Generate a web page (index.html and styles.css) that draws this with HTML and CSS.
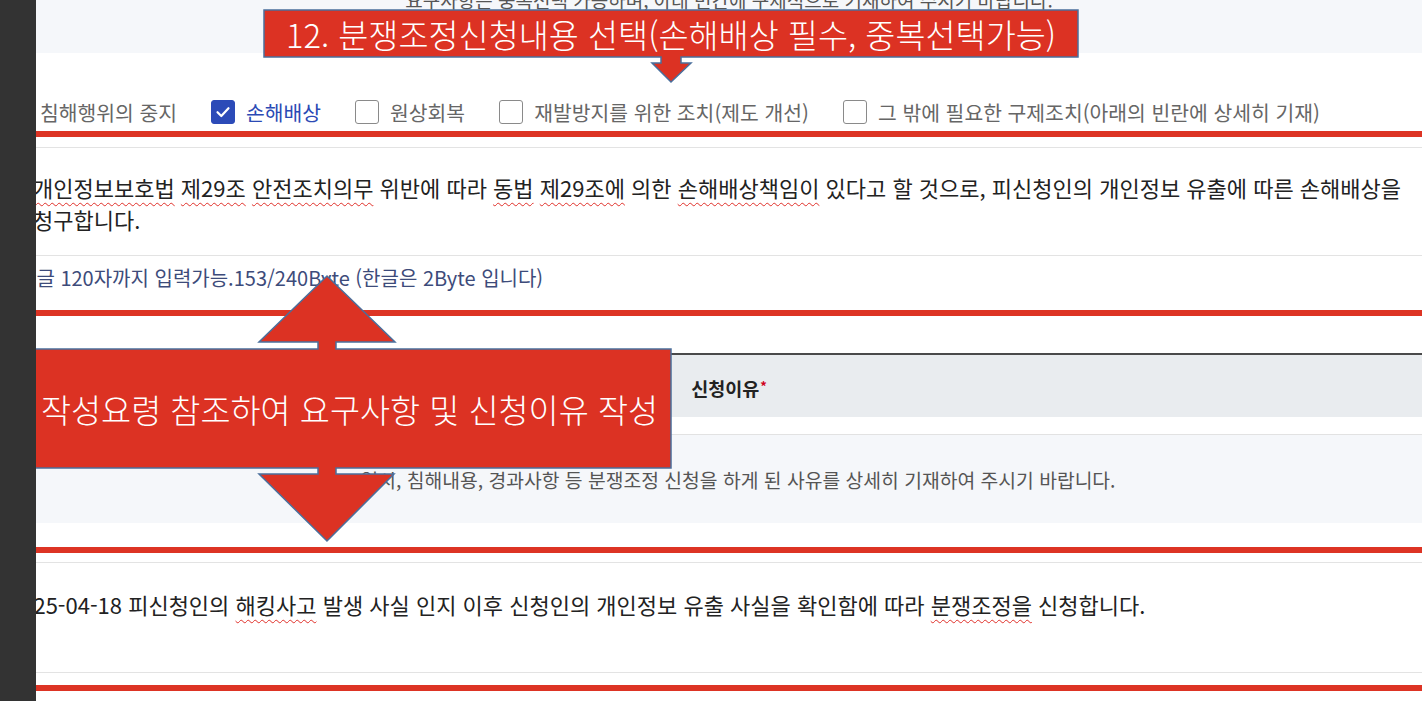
FILE: index.html
```html
<!DOCTYPE html>
<html lang="ko">
<head>
<meta charset="utf-8">
<title>분쟁조정신청</title>
<link rel="stylesheet" href="styles.css">
</head>
<body>
<div class="frame">
  <aside class="sidebar"></aside>
  <main class="main">
    <section class="guide-top">
      <p>요구사항은 중복선택 가능하며, 아래 빈칸에 구체적으로 기재하여 주시기 바랍니다.</p>
    </section>

    <div class="check-row">
      <label class="opt"><span class="cb"></span>침해행위의 중지</label>
      <label class="opt on"><span class="cb"><svg width="16" height="16" viewBox="0 0 16 16"><polyline points="2.5,8.2 6.3,12 13.5,4.2" fill="none" stroke="#fff" stroke-width="2.2" stroke-linecap="round" stroke-linejoin="round"/></svg></span>손해배상</label>
      <label class="opt"><span class="cb"></span>원상회복</label>
      <label class="opt"><span class="cb"></span>재발방지를 위한 조치(제도 개선)</label>
      <label class="opt"><span class="cb"></span>그 밖에 필요한 구제조치(아래의 빈란에 상세히 기재)</label>
    </div>

    <div class="rule"></div>

    <div class="textbox tb1">
      <p><span class="spell">개인정보보호법</span> <span class="spell">제29조</span> <span class="spell">안전조치의무</span> 위반에 따라 <span class="spell">동법</span> <span class="spell">제29조에</span> 의한 <span class="spell">손해배상책임이</span> 있다고 할 것으로, 피신청인의 개인정보 유출에 따른 손해배상을 청구합니다.</p>
    </div>
    <div class="counter">한글 120자까지 입력가능.153/240Byte (한글은 2Byte 입니다)</div>

    <div class="rule"></div>

    <div class="reason">
      <div class="reason-head">신청이유<span class="req">*</span></div>
      <div class="reason-body">일시, 침해내용, 경과사항 등 분쟁조정 신청을 하게 된 사유를 상세히 기재하여 주시기 바랍니다.</div>
    </div>

    <div class="rule rule3"></div>

    <div class="textbox tb2">
      <p>2025-04-18 피신청인의 <span class="spell">해킹사고</span> 발생 사실 인지 이후 신청인의 개인정보 유출 사실을 확인함에 따라 <span class="spell">분쟁조정을</span> 신청합니다.</p>
    </div>

    <div class="rule rule4"></div>
  </main>
</div>

<div class="callout callout-top">
  <svg class="callout-shape" width="820" height="76" viewBox="0 0 820 76">
    <polygon points="2,2 816,2 816,49 419,49 419,55 429,55 409,74 390,55 399,55 399,49 2,49" />
  </svg>
  <div class="callout-text top-text">12. 분쟁조정신청내용 선택(손해배상 필수, 중복선택가능)</div>
</div>

<div class="callout callout-mid">
  <svg class="callout-shape" width="652" height="274" viewBox="0 0 652 274">
    <polygon points="4,77 294,77 294,70 235,70 303,4 371,70 312,70 312,77 647,77 647,196 312,196 312,202 370,202 303,269 235,202 294,202 294,196 4,196" />
  </svg>
  <div class="callout-text mid-text">작성요령 참조하여 요구사항 및 신청이유 작성</div>
</div>
</body>
</html>
```

FILE: styles.css
```css
* { box-sizing: border-box; }

html, body {
  margin: 0;
  padding: 0;
}

body {
  width: 1422px;
  height: 701px;
  overflow: hidden;
  position: relative;
  background: #ffffff;
  font-family: "Noto Sans CJK KR", "Noto Sans", sans-serif;
  color: #222;
}

.frame {
  display: flex;
  height: 701px;
}

.sidebar {
  width: 36px;
  flex: none;
  background: #333333;
  position: relative;
  z-index: 5;
}

.main {
  flex: 1;
  min-width: 0;
  overflow: hidden;
  display: flex;
  flex-direction: column;
}

/* top guide strip */
.guide-top {
  height: 53px;
  flex: none;
  background: #f5f7fa;
  overflow: hidden;
  text-align: center;
}

.guide-top p {
  margin: -13px 0 0;
  font-size: 19px;
  line-height: 26px;
  color: #555;
  white-space: nowrap;
}

/* checkbox row */
.check-row {
  height: 78px;
  flex: none;
  display: flex;
  align-items: center;
  padding-top: 47px;
  padding-bottom: 7px;
  margin-left: -31px;
  font-size: 20.4px;
  line-height: 24px;
  color: #666;
}

.opt {
  display: flex;
  align-items: center;
  gap: 11px;
  margin-right: 34px;
  white-space: nowrap;
}

.cb {
  width: 24px;
  height: 24px;
  flex: none;
  border: 1.5px solid #8a8a8a;
  border-radius: 3px;
  background: #fff;
  display: flex;
  align-items: center;
  justify-content: center;
}

.opt.on {
  color: #2b4ab5;
}

.opt.on .cb {
  background: #2c4bb8;
  border-color: #2c4bb8;
}

/* red annotation rules */
.rule {
  height: 6px;
  flex: none;
  background: #dd3424;
}

.rule3 { margin-top: 24px; }
.rule4 { margin-top: 12px; }

/* text areas */
.textbox {
  flex: none;
  border-top: 1px solid #e3e3e3;
  border-bottom: 1px solid #e3e3e3;
}

.textbox p {
  margin: 0 0 0 -3px;
  font-size: 22px;
  line-height: 32px;
  color: #222;
}

.tb1 {
  margin-top: 10px;
  padding: 23px 8px 20px 0;
}

.tb2 {
  margin-top: 9px;
  padding: 25px 10px 52px 0;
}

.tb2 p {
  margin-left: -27px;
  white-space: nowrap;
}

.spell {
  text-decoration: underline wavy #e0302a;
  text-decoration-thickness: 1.4px;
  text-underline-offset: 5px;
  text-decoration-skip-ink: none;
}

.counter {
  flex: none;
  height: 54px;
  padding-top: 10px;
  margin-left: -18px;
  font-size: 20px;
  line-height: 24px;
  color: #3d4b7a;
  white-space: nowrap;
}

/* reason table */
.reason {
  flex: none;
  margin-top: 37px;
  border-top: 2px solid #4a4a4a;
}

.reason-head {
  height: 62px;
  background: #e9ecef;
  display: flex;
  align-items: center;
  justify-content: center;
  padding-top: 4px;
  font-size: 18.5px;
  font-weight: 700;
  color: #222;
}

.req {
  color: #d0021b;
  font-size: 13px;
  align-self: flex-start;
  margin-top: 17px;
  margin-left: 1px;
}

.reason-body {
  margin-top: 17px;
  height: 89px;
  border-top: 1px solid #e2e2e2;
  background: #f5f7fa;
  padding-top: 32px;
  padding-left: 18px;
  text-align: center;
  font-size: 19.3px;
  line-height: 26px;
  color: #555;
  white-space: nowrap;
}

/* annotation callouts (overlays) */
.callout {
  position: absolute;
  z-index: 3;
}

.callout-shape {
  position: absolute;
  left: 0;
  top: 0;
}

.callout-shape polygon {
  fill: #dc3223;
  stroke: #4a6f9c;
  stroke-width: 1.5;
  stroke-linejoin: miter;
}

.callout-text {
  position: relative;
  display: flex;
  align-items: center;
  justify-content: center;
  color: #fff;
  font-size: 32.7px;
  font-weight: 300;
  white-space: nowrap;
}

.callout-top {
  left: 262px;
  top: 8px;
  width: 820px;
  height: 76px;
}

.top-text {
  margin: 2px 0 0 2px;
  width: 814px;
  height: 47px;
}

.callout-mid {
  left: 24px;
  top: 272px;
  width: 652px;
  height: 274px;
}

.mid-text {
  margin: 77px 0 0 4px;
  width: 643px;
  height: 119px;
}
```
